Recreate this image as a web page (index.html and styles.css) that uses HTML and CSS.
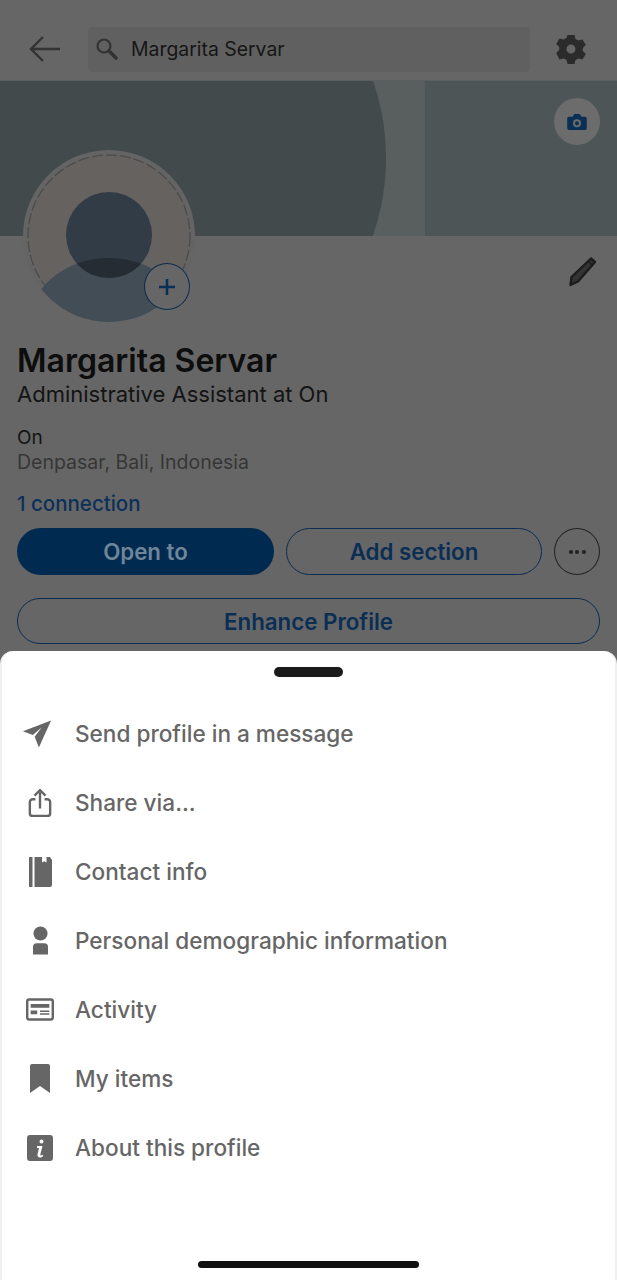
FILE: index.html
```html
<!DOCTYPE html>
<html lang="en">
<head>
<meta charset="utf-8">
<title>Margarita Servar</title>
<link rel="stylesheet" href="styles.css">
</head>
<body>
<div class="screen">
  <header class="topbar">
    <svg class="back" width="34" height="28" viewBox="0 0 34 28"><path d="M15 2 3 14l12 12M3 14h29" fill="none" stroke="#333" stroke-width="2.400"/></svg>
    <div class="search">
      <svg class="search-icon" width="24" height="24" viewBox="0 0 24 24"><circle cx="9" cy="9" r="6.500" fill="none" stroke="#333" stroke-width="2.200"/><path d="m14 14 7 7" stroke="#333" stroke-width="3.600" stroke-linecap="round"/></svg>
      <span class="search-text">Margarita Servar</span>
    </div>
    <svg class="gear" width="30" height="30" viewBox="0 0 30 30"><path fill-rule="evenodd" fill="#2b2b2b" d="M11.500 1h7l1 4 3 1.600 4-1.200 3.300 5.600-3 2.900v3.200l3 2.900-3.300 5.600-4-1.200-3 1.600-1 4h-7l-1-4-3-1.600-4 1.200L.200 19l3-2.900v-3.200l-3-2.900 3.300-5.600 4 1.200 3-1.600zM15 10.500a4.500 4.500 0 1 0 0 9 4.500 4.500 0 0 0 0-9z"/></svg>
  </header>

  <div class="banner">
    <svg class="banner-art" width="617" height="155" viewBox="0 0 617 155">
      <rect width="617" height="155" fill="#595e5e"/>
      <circle cx="149" cy="77" r="237" fill="#434a4b"/>
      <rect x="425" width="192" height="155" fill="#4d5556"/>
    </svg>
    <div class="camera">
      <svg width="20" height="16" viewBox="0 0 22 18"><path fill-rule="evenodd" fill="#0a2f55" d="M2 3h4l2-3h6l2 3h4a2 2 0 0 1 2 2v11a2 2 0 0 1-2 2H2a2 2 0 0 1-2-2V5a2 2 0 0 1 2-2zm9 3a4.500 4.500 0 1 0 0 9 4.500 4.500 0 0 0 0-9zm0 2.200a2.300 2.300 0 1 1 0 4.600 2.300 2.300 0 0 1 0-4.600z"/></svg>
    </div>
  </div>

  <div class="avatar">
    <svg width="174" height="174" viewBox="0 0 174 174">
      <defs>
        <clipPath id="disc"><circle cx="87" cy="87" r="86"/></clipPath>
        <clipPath id="head"><circle cx="87" cy="86" r="43"/></clipPath>
      </defs>
      <circle cx="87" cy="87" r="86" fill="#646464"/>
      <circle cx="87" cy="87" r="81" fill="#666260" stroke="#4c4c4c" stroke-width="1.300" stroke-dasharray="11 3"/>
      <g clip-path="url(#disc)">
        <ellipse cx="87" cy="178" rx="81" ry="69" fill="#434d56"/>
        <circle cx="87" cy="86" r="43" fill="#323c47"/>
        <ellipse cx="87" cy="178" rx="81" ry="69" fill="#252c34" clip-path="url(#head)"/>
      </g>
    </svg>
    <div class="add-photo">
      <svg width="20" height="20" viewBox="0 0 20 20"><path d="M10 2v16M2 10h16" stroke="#0a2f55" stroke-width="2.600"/></svg>
    </div>
  </div>

  <main class="profile">
    <div class="edit-row">
      <svg width="32" height="32" viewBox="0 0 32 32"><path fill="#333" stroke="#1c1c1c" stroke-width="2.400" stroke-linejoin="round" d="M25 3.500 29 7 12 26.500l-7.500 3.500 1-8z"/><path d="m22.500 6.500 4 3.500" stroke="#1c1c1c" stroke-width="1.600"/></svg>
    </div>
    <h1 class="name">Margarita Servar</h1>
    <p class="headline">Administrative Assistant at On</p>
    <p class="company">On</p>
    <p class="location">Denpasar, Bali, Indonesia</p>
    <p class="connections">1 connection</p>
    <div class="actions">
      <div class="btn btn-solid">Open to</div>
      <div class="btn btn-outline">Add section</div>
      <div class="more"><span class="dot"></span><span class="dot"></span><span class="dot"></span></div>
    </div>
    <div class="btn btn-outline btn-wide">Enhance Profile</div>
  </main>

  <section class="sheet">
    <div class="handle"></div>
    <ul class="menu">
      <li class="item">
        <span class="icon icon-send"><svg width="30" height="31" viewBox="0 0 32 32"><path fill="#666" d="M31 2 1 13.500l10.500 4.200L21 9.500l-7.500 10L18 31z"/></svg></span>
        <span class="label">Send profile in a message</span>
      </li>
      <li class="item">
        <span class="icon"><svg width="24" height="30" viewBox="0 0 26 32"><path d="M8 12H5a3 3 0 0 0-3 3v12a3 3 0 0 0 3 3h16a3 3 0 0 0 3-3V15a3 3 0 0 0-3-3h-3M13 22V3M7 8l6-6 6 6" fill="none" stroke="#666" stroke-width="2.600"/></svg></span>
        <span class="label">Share via...</span>
      </li>
      <li class="item">
        <span class="icon"><svg width="24" height="30" viewBox="0 0 24 30"><path fill="#666" d="M1 0h3.500v30H1zM6.500 0H14v5.500l2.200-1.300 2.300 1.300V0H22l2 3v25a2 2 0 0 1-2 2H6.500z"/></svg></span>
        <span class="label">Contact info</span>
      </li>
      <li class="item">
        <span class="icon"><svg width="15" height="29" viewBox="0 0 16 30"><circle cx="8" cy="7.500" r="7.500" fill="#666"/><path fill="#666" d="M0 30V22a4 4 0 0 1 4-4h8a4 4 0 0 1 4 4v8z"/></svg></span>
        <span class="label">Personal demographic information</span>
      </li>
      <li class="item">
        <span class="icon"><svg width="28" height="23" viewBox="0 0 30 24"><rect x="1.300" y="1.300" width="27.400" height="21.400" rx="2" fill="none" stroke="#666" stroke-width="2.600"/><path fill="#666" d="M5 6h20v4H5zM5 13h7v4H5zM15 13h10v1.600H15zM15 16h10v1.600H15z"/></svg></span>
        <span class="label">Activity</span>
      </li>
      <li class="item">
        <span class="icon"><svg width="20" height="29" viewBox="0 0 20 29"><path fill="#666" d="M2 0h16a2 2 0 0 1 2 2v27l-10-7-10 7V2a2 2 0 0 1 2-2z"/></svg></span>
        <span class="label">My items</span>
      </li>
      <li class="item">
        <span class="icon"><svg width="26" height="26" viewBox="0 0 26 26"><path fill-rule="evenodd" fill="#666" d="M3 0h20a3 3 0 0 1 3 3v20a3 3 0 0 1-3 3H3a3 3 0 0 1-3-3V3a3 3 0 0 1 3-3zm11.500 4.500a2 2 0 1 0 0 4 2 2 0 0 0 0-4zM10 11v2h2l-1.500 6.500c-.4 2 1 3 2.500 3 1.300 0 2.500-.6 3.300-1.500l-.8-1.300c-.6.500-1.300.8-1.800.7-.4-.1-.5-.4-.4-.9L15.500 11z"/></svg></span>
        <span class="label">About this profile</span>
      </li>
    </ul>
    <div class="home-indicator"></div>
  </section>
</div>
</body>
</html>
```

FILE: styles.css
```css
* { box-sizing: border-box; }
html, body { margin: 0; padding: 0; }
body { width: 617px; height: 1280px; overflow: hidden; background: #666; font-family: Inter, "Liberation Sans", sans-serif; }
svg { display: block; }
p, h1, ul { margin: 0; padding: 0; }

.screen { position: relative; width: 617px; height: 1280px; overflow: hidden; background: #666; }

.topbar { display: flex; align-items: center; height: 81px; padding: 18px 30px 0 28px; border-bottom: 1px solid #5b5f60; background: #666; }
.back { flex: none; }
.search { display: flex; align-items: center; gap: 12px; width: 442px; height: 45px; margin-left: 26px; padding-left: 7px; border-radius: 4px; background: #606060; }
.search-icon { flex: none; }
.search-text { font-size: 19.400px; color: #161616; white-space: nowrap; }
.gear { flex: none; margin-left: 26px; }

.banner { position: relative; height: 155px; }
.banner-art { position: absolute; left: 0; top: 0; }
.camera { position: absolute; left: 554px; top: 17px; display: flex; align-items: center; justify-content: center; width: 46px; height: 47px; border-radius: 50%; background: #6c6c6c; }

.avatar { position: absolute; left: 22px; top: 149px; width: 174px; height: 174px; }
.add-photo { position: absolute; left: 122px; top: 114px; display: flex; align-items: center; justify-content: center; width: 46px; height: 47px; border: 1.500px solid #0a2d52; border-radius: 50%; background: #666; }

.profile { padding: 0 17px; }
.edit-row { display: flex; justify-content: flex-end; height: 105px; padding: 19px 2px 0 0; }
.name { font-size: 32px; line-height: 40px; font-weight: 600; color: #0d0d0d; white-space: nowrap; }
.headline { font-size: 22px; line-height: 27px; color: #141414; }
.company { margin-top: 18px; font-size: 19px; line-height: 24px; color: #141414; }
.location { font-size: 19.500px; line-height: 25px; color: #363636; }
.connections { margin-top: 16px; font-size: 20.500px; line-height: 26px; font-weight: 500; color: #0c305a; }

.actions { display: flex; gap: 12px; margin-top: 11px; }
.btn { display: flex; align-items: center; justify-content: center; border-radius: 24px; font-size: 22.300px; font-weight: 600; white-space: nowrap; }
.btn-solid { width: 257px; height: 47px; background: #012a50; color: #6f8599; }
.btn-outline { width: 256px; height: 47px; border: 1.500px solid #0a2d52; color: #0b2e55; }
.btn-wide { width: 583px; height: 46px; margin-top: 23px; }
.more { display: flex; align-items: center; justify-content: center; gap: 2.500px; width: 46px; height: 47px; border: 1.500px solid #222; border-radius: 50%; }
.dot { width: 4px; height: 4px; border-radius: 50%; background: #222; }

.sheet { position: absolute; left: 0; top: 651px; width: 617px; height: 629px; padding-top: 16px; border-radius: 13px 13px 0 0; border-left: 2px solid #f0f0f0; border-right: 2px solid #f0f0f0; background: #fff; }
.handle { width: 69px; height: 10px; margin: 0 auto; border-radius: 5px; background: #1b1b1b; }
.menu { display: flex; flex-direction: column; margin-top: 22px; list-style: none; }
.item { display: flex; align-items: center; height: 69px; }
.icon { display: flex; align-items: center; justify-content: center; flex: none; width: 73px; padding-left: 3px; }
.icon-send { padding-right: 3px; padding-left: 0; }
.label { font-size: 22.600px; font-weight: 540; color: #666; white-space: nowrap; }
.home-indicator { position: absolute; left: 196px; bottom: 12px; width: 221px; height: 7px; border-radius: 4px; background: #111; }
```
